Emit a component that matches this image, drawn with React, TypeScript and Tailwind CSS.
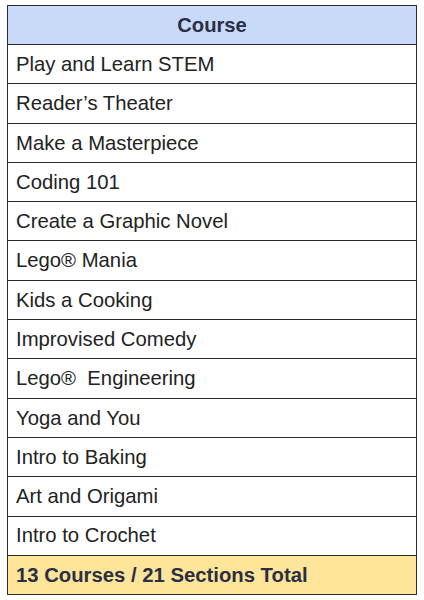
const courses = [
  'Play and Learn STEM',
  'Reader\u2019s Theater',
  'Make a Masterpiece',
  'Coding 101',
  'Create a Graphic Novel',
  'Lego\u00ae Mania',
  'Kids a Cooking',
  'Improvised Comedy',
  'Lego\u00ae\u00a0 Engineering',
  'Yoga and You',
  'Intro to Baking',
  'Art and Origami',
  'Intro to Crochet',
];

export default function App() {
  return (
    <div className="bg-white w-[424px] h-[600px] pt-[5px] pl-[7px] font-['Liberation_Sans',Arial,sans-serif]">
      <div className="w-[410px] border-[1.5px] border-[#2b2b2b]">
        <div className="h-[39px] bg-[#c9daf8] border-b-[1.5px] border-[#2b2b2b] flex items-center justify-center text-[20.2px] font-bold text-[#2a2f45]">
          Course
        </div>
        {courses.map((c) => (
          <div
            key={c}
            className="h-[39.3px] border-b-[1.5px] border-[#2b2b2b] flex items-center pl-[8px] text-[20.3px] text-[#222]"
          >
            <span className="whitespace-pre">{c}</span>
          </div>
        ))}
        <div className="h-[38px] bg-[#ffe599] flex items-center pl-[8px] text-[20.3px] font-bold text-[#2a2f45]">
          13 Courses / 21 Sections Total
        </div>
      </div>
    </div>
  );
}
